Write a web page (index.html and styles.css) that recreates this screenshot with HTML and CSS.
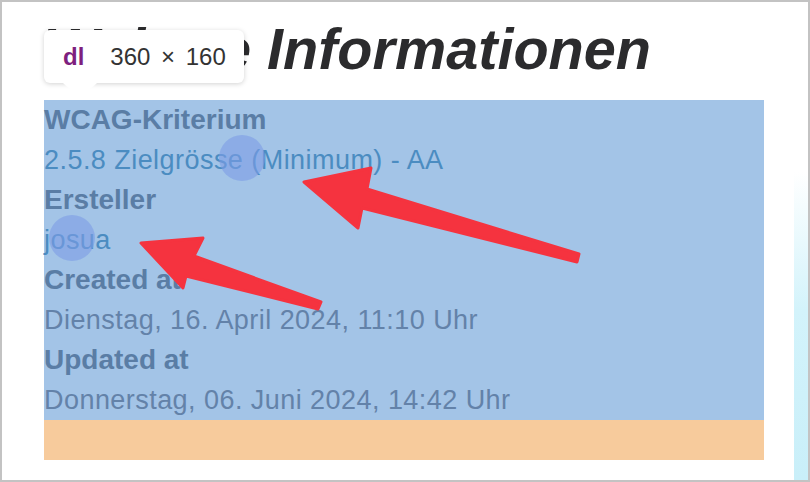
FILE: index.html
```html
<!DOCTYPE html>
<html lang="de">
<head>
<meta charset="utf-8">
<title>Weitere Informationen</title>
<link rel="stylesheet" href="styles.css">
</head>
<body>
<div class="frame">
  <div class="page">
    <h1 class="title">Weitere Informationen</h1>
    <div class="dl-box">
      <dl class="info">
        <dt>WCAG-Kriterium</dt>
        <dd><a href="#">2.5.8 Zielgrösse (Minimum) - AA</a></dd>
        <dt>Ersteller</dt>
        <dd><a href="#">josua</a></dd>
        <dt>Created at</dt>
        <dd>Dienstag, 16. April 2024, 11:10 Uhr</dd>
        <dt>Updated at</dt>
        <dd>Donnerstag, 06. Juni 2024, 14:42 Uhr</dd>
      </dl>
    </div>
  </div>

  <div class="tooltip">
    <span class="tag">dl</span>
    <span class="size">360 × 160</span>
  </div>

  <div class="edge-strip"></div>

  <svg class="annotations" width="810" height="482" viewBox="0 0 810 482">
    <circle cx="242" cy="158" r="23" fill="#7d9ce6" fill-opacity="0.6"/>
    <circle cx="72" cy="238" r="23" fill="#7d9ce6" fill-opacity="0.6"/>
    <polygon points="304,182 371,168 367,189 579,254 577,262 362,208 358,228" fill="#f5333f" stroke="#f5333f" stroke-width="3" stroke-linejoin="round"/>
    <polygon points="141,243 203,238 194,256 321,302 318,309 186,276 183,288" fill="#f5333f" stroke="#f5333f" stroke-width="3" stroke-linejoin="round"/>
  </svg>
</div>
</body>
</html>
```
FILE: styles.css
```css
html, body {
  margin: 0;
  padding: 0;
  background: #ffffff;
}

.frame {
  position: relative;
  width: 810px;
  height: 482px;
  box-sizing: border-box;
  border: 2px solid #c3c3c3;
  background: #ffffff;
  overflow: hidden;
  font-family: "Liberation Sans", Arial, sans-serif;
}

.page {
  display: flex;
  flex-direction: column;
  padding: 17px 0 0 42px;
}

.title {
  margin: 0 0 21px 0;
  font-size: 57.6px;
  line-height: 60px;
  font-weight: bold;
  font-style: italic;
  color: #2b2b2d;
  letter-spacing: 0;
}

.dl-box {
  width: 720px;
  padding-bottom: 40px;
  background: #f7cb9c;
}

.info {
  margin: 0;
  background: #a3c4e7;
}

.info dt,
.info dd {
  margin: 0;
  height: 40px;
  box-sizing: border-box;
  line-height: 34px;
  padding-top: 3px;
  padding-bottom: 3px;
  white-space: nowrap;
}

.info dt {
  font-size: 28px;
  font-weight: bold;
  color: #5a7da5;
}

.info dd {
  font-size: 27px;
  letter-spacing: 0.45px;
  color: #6382a9;
}

.info dd a {
  color: #4b8cc1;
  text-decoration: none;
}

.tooltip {
  position: absolute;
  left: 42px;
  top: 28px;
  width: 200px;
  height: 53px;
  box-sizing: border-box;
  display: flex;
  align-items: center;
  gap: 26px;
  padding: 0 0 0 19px;
  background: #ffffff;
  border-radius: 6px;
  box-shadow: 0 1px 5px rgba(0, 0, 0, 0.18);
  font-size: 24px;
}

.tooltip::after {
  content: "";
  position: absolute;
  left: 19px;
  top: 53px;
  border-left: 17px solid transparent;
  border-right: 17px solid transparent;
  border-top: 16px solid #ffffff;
}

.tooltip .tag {
  font-weight: bold;
  color: #7e1f7e;
}

.tooltip .size {
  color: #333333;
  word-spacing: 4px;
}

.edge-strip {
  position: absolute;
  right: 0;
  top: 170px;
  bottom: 0;
  width: 14px;
  background: linear-gradient(to bottom, rgba(200, 240, 250, 0) 0%, #d3f3fb 45%, #c9eff9 100%);
}

.annotations {
  position: absolute;
  left: -2px;
  top: -2px;
  pointer-events: none;
}
```
